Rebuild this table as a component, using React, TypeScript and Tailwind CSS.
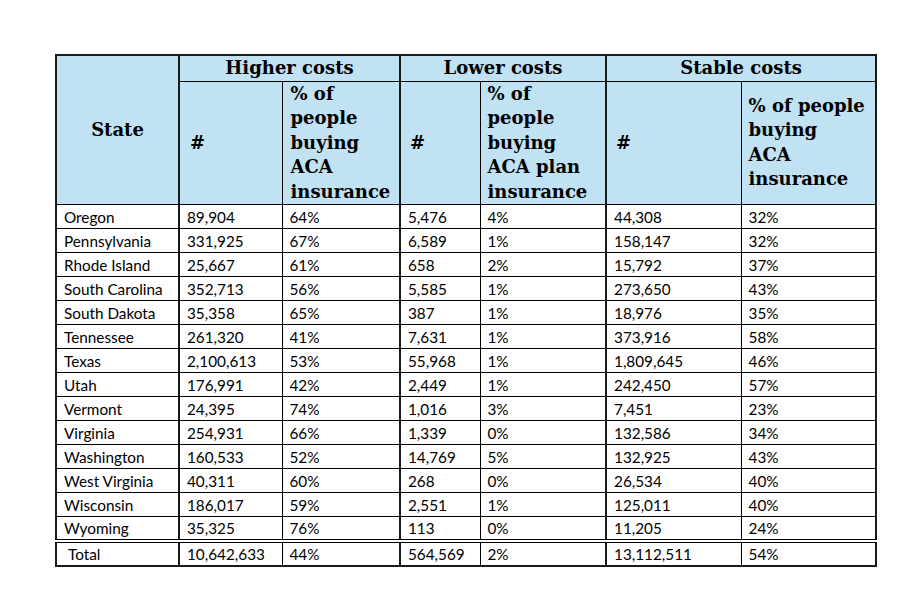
import React from "react";

const rows: [string, string, string, string, string, string, string][] = [
  ["Oregon", "89,904", "64%", "5,476", "4%", "44,308", "32%"],
  ["Pennsylvania", "331,925", "67%", "6,589", "1%", "158,147", "32%"],
  ["Rhode Island", "25,667", "61%", "658", "2%", "15,792", "37%"],
  ["South Carolina", "352,713", "56%", "5,585", "1%", "273,650", "43%"],
  ["South Dakota", "35,358", "65%", "387", "1%", "18,976", "35%"],
  ["Tennessee", "261,320", "41%", "7,631", "1%", "373,916", "58%"],
  ["Texas", "2,100,613", "53%", "55,968", "1%", "1,809,645", "46%"],
  ["Utah", "176,991", "42%", "2,449", "1%", "242,450", "57%"],
  ["Vermont", "24,395", "74%", "1,016", "3%", "7,451", "23%"],
  ["Virginia", "254,931", "66%", "1,339", "0%", "132,586", "34%"],
  ["Washington", "160,533", "52%", "14,769", "5%", "132,925", "43%"],
  ["West Virginia", "40,311", "60%", "268", "0%", "26,534", "40%"],
  ["Wisconsin", "186,017", "59%", "2,551", "1%", "125,011", "40%"],
  ["Wyoming", "35,325", "76%", "113", "0%", "11,205", "24%"],
];

const groupLeft = [false, true, false, true, false, true, false];

export default function App() {
  return (
    <div className="w-[905px] h-[613px] bg-white pt-[54px] pl-[55px]">
      <table className="border-collapse table-fixed w-[820px] border-2 border-[#1a1a1a] text-black">
        <colgroup>
          <col className="w-[123px]" />
          <col className="w-[103px]" />
          <col className="w-[118px]" />
          <col className="w-[80px]" />
          <col className="w-[126px]" />
          <col className="w-[135px]" />
          <col className="w-[135px]" />
        </colgroup>
        <thead className="font-['DejaVu_Serif',serif] font-bold text-[18px] leading-[24.5px] bg-[#c0e2f3]">
          <tr className="h-[25px]">
            <th rowSpan={2} className="border border-black border-r-2 border-r-[#1a1a1a] text-center align-middle font-bold">
              State
            </th>
            <th colSpan={2} className="border border-black border-l-2 border-l-[#1a1a1a] text-center align-middle p-0">
              Higher costs
            </th>
            <th colSpan={2} className="border border-black border-l-2 border-l-[#1a1a1a] text-center align-middle p-0">
              Lower costs
            </th>
            <th colSpan={2} className="border border-black border-l-2 border-l-[#1a1a1a] text-center align-middle p-0">
              Stable costs
            </th>
          </tr>
          <tr className="h-[123px]">
            <th className="border border-black border-l-2 border-l-[#1a1a1a] text-left align-middle pl-[10px] py-0">#</th>
            <th className="border border-black text-left align-middle pl-[8px] pr-0 py-0">
              % of
              <br />
              people
              <br />
              buying
              <br />
              ACA
              <br />
              insurance
            </th>
            <th className="border border-black border-l-2 border-l-[#1a1a1a] text-left align-middle pl-[9px] py-0">#</th>
            <th className="border border-black text-left align-middle pl-[7px] pr-0 py-0">
              % of
              <br />
              people
              <br />
              buying
              <br />
              ACA plan
              <br />
              insurance
            </th>
            <th className="border border-black border-l-2 border-l-[#1a1a1a] text-left align-middle pl-[9px] py-0">#</th>
            <th className="border border-black text-left align-middle pl-[7px] pr-0 py-0 whitespace-nowrap">
              % of people
              <br />
              buying
              <br />
              ACA
              <br />
              insurance
            </th>
          </tr>
        </thead>
        <tbody className="font-['Lato',sans-serif] text-[15.3px] leading-[20px]">
          {rows.map((r) => (
            <tr key={r[0]} className="h-[24px]">
              {r.map((c, i) => (
                <td
                  key={i}
                  className={
                    groupLeft[i]
                      ? "border border-black border-l-2 border-l-[#1a1a1a] pl-[7px] py-0 align-middle whitespace-nowrap"
                      : "border border-black pl-[7px] py-0 align-middle whitespace-nowrap"
                  }
                >
                  {c}
                </td>
              ))}
            </tr>
          ))}
          <tr className="h-[25px]">
            {["Total", "10,642,633", "44%", "564,569", "2%", "13,112,511", "54%"].map((c, i) => (
              <td
                key={i}
                className={
                  (groupLeft[i]
                    ? "border border-black border-l-2 border-l-[#1a1a1a] "
                    : "border border-black ") +
                  "border-t-[4px] border-t-black border-double py-0 align-middle whitespace-nowrap " +
                  (i === 0 ? "pl-[11px]" : "pl-[7px]")
                }
              >
                {c}
              </td>
            ))}
          </tr>
        </tbody>
      </table>
    </div>
  );
}
